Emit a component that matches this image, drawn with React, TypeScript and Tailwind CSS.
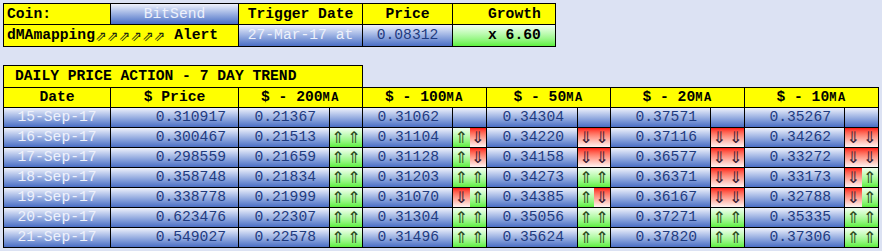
import React from "react";

type Trend = "uu" | "ud" | "du" | "dd" | null;
type Row = [string, string, [string, Trend][]];

const rows: Row[] = [
  ["15-Sep-17", "0.310917", [["0.21367", null], ["0.31062", null], ["0.34304", null], ["0.37571", null], ["0.35267", null]]],
  ["16-Sep-17", "0.300467", [["0.21513", "uu"], ["0.31104", "ud"], ["0.34220", "dd"], ["0.37116", "dd"], ["0.34262", "dd"]]],
  ["17-Sep-17", "0.298559", [["0.21659", "uu"], ["0.31128", "ud"], ["0.34158", "dd"], ["0.36577", "dd"], ["0.33272", "dd"]]],
  ["18-Sep-17", "0.358748", [["0.21834", "uu"], ["0.31203", "uu"], ["0.34273", "uu"], ["0.36371", "dd"], ["0.33173", "du"]]],
  ["19-Sep-17", "0.338778", [["0.21999", "uu"], ["0.31070", "du"], ["0.34385", "ud"], ["0.36167", "dd"], ["0.32788", "du"]]],
  ["20-Sep-17", "0.623476", [["0.22307", "uu"], ["0.31304", "uu"], ["0.35056", "uu"], ["0.37271", "uu"], ["0.35335", "uu"]]],
  ["21-Sep-17", "0.549027", [["0.22578", "uu"], ["0.31496", "uu"], ["0.35624", "uu"], ["0.37820", "uu"], ["0.37306", "uu"]]],
];

const mono = "font-['Liberation_Mono','Courier_New',monospace] text-[14.67px]";
const blue = "bg-linear-to-b from-[#f0f2fb] to-[#4b6ec4]";
const green = "bg-linear-to-b from-[#f2fff0] to-[#5cf03a]";
const red = "bg-linear-to-b from-[#ff0a0a] to-[#fff3f3]";
const yellow = "bg-[#ffff00]";

function Half({ dir }: { dir: "u" | "d" }) {
  return (
    <div
      className={`flex-1 flex items-center justify-center font-['DejaVu_Sans',sans-serif] text-[16px] leading-none ${
        dir === "u" ? `${green} text-[#2c4a1c]` : `${red} text-[#3a2236]`
      }`}
    >
      {dir === "u" ? "⇑" : "⇓"}
    </div>
  );
}

function TrendCell({ t }: { t: Trend }) {
  if (!t) return <div className={blue} />;
  return (
    <div className="flex">
      <Half dir={t[0] as "u" | "d"} />
      <Half dir={t[1] as "u" | "d"} />
    </div>
  );
}

function MAHeader({ n }: { n: string }) {
  return (
    <div className={`${yellow} col-span-2 flex items-center justify-center font-bold text-black`}>
      <span className="whitespace-pre">{`$ - ${n}`}</span>
      <span className="text-[12px] tracking-[1.5px]">MA</span>
    </div>
  );
}

export default function App() {
  return (
    <div className={`w-full h-[251px] bg-[#dce2f3] pt-[3px] pl-[3px] ${mono} leading-none`}>
      {/* top table */}
      <div className="grid w-max grid-cols-[106px_127px_123px_89px_102px] grid-rows-[20px_21px] gap-[1px] bg-black p-[1px]">
        <div className={`${yellow} flex items-center pl-[3px] font-bold text-black`}>Coin:</div>
        <div className={`${blue} flex items-center justify-center text-[#eef1fb]`}>BitSend</div>
        <div className={`${yellow} flex items-center justify-center font-bold text-black`}>Trigger Date</div>
        <div className={`${yellow} flex items-center justify-center font-bold text-black`}>Price</div>
        <div className={`${yellow} flex items-center pl-[35px] font-bold text-black`}>Growth</div>

        <div className={`${yellow} col-span-2 flex items-center pl-[3px] font-bold text-black whitespace-pre`}>
          dMAmapping
          <span className="font-['DejaVu_Sans',sans-serif] text-[14px] font-normal text-[#1c2a10]">⇗⇗⇗⇗⇗⇗</span>
          {" Alert"}
        </div>
        <div className={`${blue} flex items-center justify-center text-[#eef1fb] whitespace-pre`}>27-Mar-17 at</div>
        <div className={`${blue} flex items-center justify-center text-[#1f3b80]`}>0.08312</div>
        <div className={`${green} flex items-center pl-[35px] font-bold text-black whitespace-pre`}>x 6.60</div>
      </div>

      {/* price action table */}
      <div className="mt-[18px] w-[360px] h-[22px] border border-b-0 border-black bg-[#ffff00] flex items-center pl-[11px] font-bold text-black whitespace-pre">
        DAILY PRICE ACTION - 7 DAY TREND
      </div>
      <div className="grid w-max grid-cols-[106px_127px_90px_32px_89px_33px_90px_32px_99px_33px_99px_33px] auto-rows-[19px] gap-[1px] bg-black p-[1px]">
        <div className={`${yellow} flex items-center justify-center font-bold text-black`}>Date</div>
        <div className={`${yellow} flex items-center justify-center font-bold text-black whitespace-pre`}>$ Price</div>
        <MAHeader n="200" />
        <MAHeader n="100" />
        <MAHeader n="50" />
        <MAHeader n="20" />
        <MAHeader n="10" />

        {rows.map(([date, price, mas]) => (
          <React.Fragment key={date}>
            <div className={`${blue} flex items-center justify-center text-[#eef1fb]`}>{date}</div>
            <div className={`${blue} flex items-center justify-end pr-[12px] text-[#1f3b80]`}>{price}</div>
            {mas.map(([v, t], i) => (
              <React.Fragment key={i}>
                <div className={`${blue} flex items-center justify-end pr-[13px] text-[#1f3b80]`}>{v}</div>
                <TrendCell t={t} />
              </React.Fragment>
            ))}
          </React.Fragment>
        ))}
      </div>
    </div>
  );
}
